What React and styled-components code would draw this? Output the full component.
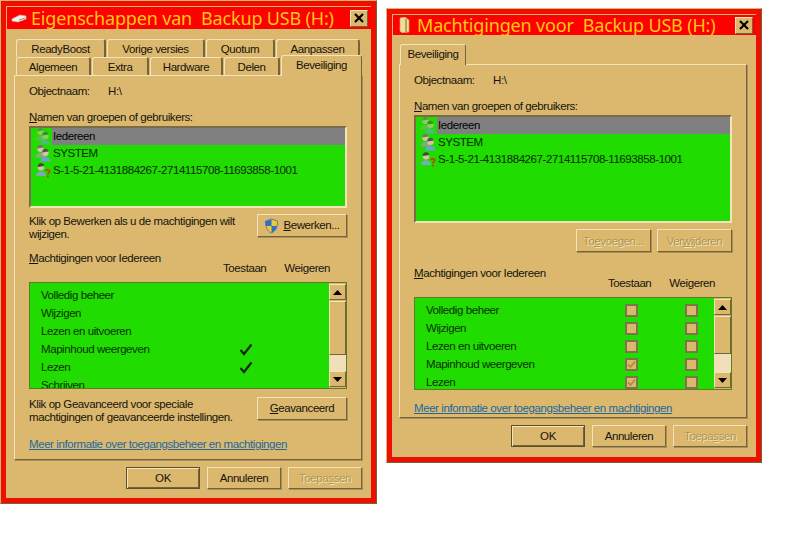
import styled, { createGlobalStyle } from "styled-components";

const tan = "#dcb86f";
const light = "#f3e4bb";
const dark = "#75633a";

const GlobalStyle = createGlobalStyle`
  html, body {
    margin: 0;
    background: #ffffff;
    overflow: hidden;
  }
  * { box-sizing: border-box; }
`;

const Desktop = styled.div`
  display: flex;
  align-items: flex-start;
  gap: 9px;
  width: 800px;
  height: 550px;
  font-family: "Liberation Sans", Arial, sans-serif;
  font-size: 11.5px;
  letter-spacing: -0.42px;
  line-height: 14px;
  color: #14140c;
`;

const Frame = styled.div`
  display: flex;
  flex-direction: column;
  flex: none;
  width: ${({ $w }) => $w}px;
  height: ${({ $h }) => $h}px;
  margin-top: ${({ $top }) => $top}px;
  background: ${tan};
  border: 1px solid;
  border-color: ${tan} ${dark} ${dark} ${tan};
`;

const Inner = styled.div`
  flex: 1;
  background: ${tan};
  border: 5px solid #ee0f00;
  padding-left: ${({ $inset }) => $inset}px;
  display: flex;
  flex-direction: column;
`;

const TitleBar = styled.div`
  display: flex;
  align-items: center;
  height: ${({ $h }) => $h}px;
  margin: 1px 0 0 -${({ $inset }) => $inset - 1}px;
  padding: 0 3px 0 4px;
  background: #ff0000;
`;

const TitleIcon = styled.svg`
  flex: none;
  width: 16px;
  height: 16px;
  margin-right: 4px;
`;

const TitleText = styled.div`
  flex: 1;
  min-width: 0;
  color: #ffc814;
  font-family: "Noto Sans", sans-serif;
  font-size: 18px;
  letter-spacing: -0.17px;
  line-height: 20px;
  white-space: pre;
`;

const CloseButton = styled.div`
  display: flex;
  align-items: center;
  justify-content: center;
  flex: none;
  width: 18px;
  height: 17px;
  background: ${tan};
  border: 1px solid;
  border-color: ${light} ${dark} ${dark} ${light};
`;

const TabRow = styled.div`
  display: flex;
  gap: 1px;
  height: 18px;
  margin-top: ${({ $mt }) => $mt || 0}px;
  margin-left: ${({ $ml }) => $ml}px;
`;

const Tab = styled.div`
  display: flex;
  align-items: center;
  justify-content: center;
  flex: none;
  width: ${({ $w }) => $w}px;
  height: ${({ $active }) => ($active ? 21 : 18)}px;
  margin-top: ${({ $active }) => ($active ? -2 : 0)}px;
  z-index: ${({ $active }) => ($active ? 2 : 1)};
  background: ${tan};
  border: 1px solid;
  border-color: ${light} ${dark} ${tan} ${light};
  border-right-width: ${({ $active }) => ($active ? 1 : 2)}px;
  border-bottom: none;
  border-radius: 3px 3px 0 0;
  padding-bottom: ${({ $active }) => ($active ? 3 : 0)}px;
`;

const Panel = styled.div`
  width: 348px;
  height: ${({ $h }) => $h}px;
  padding: 0 14px;
  border: 1px solid;
  border-color: ${light} ${dark} ${dark} ${light};
  box-shadow: 1px 1px 0 #a8905a;
`;

const NameRow = styled.div`
  display: flex;
  margin-top: 8px;
  span:first-child { width: 79px; }
`;

const Label = styled.div`
  margin-top: ${({ $mt }) => $mt || 0}px;
`;

const UserList = styled.div`
  height: ${({ $h }) => $h}px;
  margin-top: 2px;
  background: #20dc00;
  border: 2px solid;
  border-color: #7a6c45 ${light} ${light} #7a6c45;
  color: #042a00;
`;

const UserRow = styled.div`
  display: flex;
  height: 17px;
`;

const UserIconCell = styled.div`
  flex: none;
  width: 21px;
  padding-left: 4px;
  opacity: ${({ $dim }) => ($dim ? 0.6 : 1)};
`;

const UserName = styled.div`
  flex: 1;
  padding: 1px 0 0 1px;
  background: ${({ $selected }) => ($selected ? "#808080" : "transparent")};
  color: ${({ $selected }) => ($selected ? "#000000" : "#042a00")};
`;

const ActionRow = styled.div`
  display: flex;
  justify-content: space-between;
  height: 27px;
  margin-top: ${({ $mt }) => $mt}px;
  line-height: 13px;
`;

const ActionText = styled.div`
  width: 222px;
  padding-top: 1px;
`;

const ButtonRow = styled.div`
  display: flex;
  justify-content: flex-end;
  gap: ${({ $gap }) => $gap}px;
  margin-top: ${({ $mt }) => $mt}px;
  width: ${({ $w }) => $w || "auto"};
`;

const Button = styled.div`
  display: flex;
  align-items: center;
  justify-content: center;
  gap: 4px;
  flex: none;
  width: ${({ $w }) => $w}px;
  height: ${({ $h }) => $h || 23}px;
  background: ${tan};
  border: 1px solid;
  border-color: ${({ $primary }) =>
    $primary ? "#5f5130" : `${light} ${dark} ${dark} ${light}`};
  box-shadow: ${({ $primary }) =>
    $primary
      ? `inset 1px 1px 0 ${light}, inset -1px -1px 0 ${dark}`
      : "1px 1px 0 #a8905a"};
  color: ${({ $disabled }) => ($disabled ? "#b09552" : "#14140c")};
  text-shadow: ${({ $disabled }) =>
    $disabled ? `1px 1px 0 ${light}` : "none"};
`;

const PermHeader = styled.div`
  display: flex;
  justify-content: space-between;
  height: 24px;
  margin-top: ${({ $mt }) => $mt}px;
`;

const PermColumns = styled.div`
  display: flex;
  align-self: flex-end;
  gap: 18px;
  margin-right: 17px;
`;

const PermList = styled.div`
  display: flex;
  height: ${({ $h }) => $h}px;
  margin-top: 7px;
  background: #20dc00;
  border: 1px solid #5c7a28;
`;

const PermRows = styled.div`
  flex: 1;
  height: 100%;
  padding: 3px 0 0 11px;
  overflow: hidden;
  color: #063000;
`;

const PermRow = styled.div`
  display: grid;
  grid-template-columns: 157px 24px 24px;
  column-gap: 36px;
  align-items: center;
  height: 18px;
`;

const CheckCell = styled.div`
  display: flex;
  justify-content: center;
`;

const CheckBox = styled.div`
  display: flex;
  align-items: center;
  justify-content: center;
  width: 13px;
  height: 13px;
  background: ${tan};
  border: 2px solid #7c7548;
`;

const ScrollBar = styled.div`
  display: flex;
  flex-direction: column;
  flex: none;
  width: 17px;
  padding: 1px 0;
  background: ${tan};
`;

const ScrollButton = styled.div`
  display: flex;
  align-items: center;
  justify-content: center;
  flex: none;
  height: 16px;
  background: ${tan};
  border: 1px solid;
  border-color: ${light} ${dark} ${dark} ${light};
`;

const Thumb = styled.div`
  flex: none;
  height: ${({ $h }) => $h}px;
  margin-top: 1px;
  background: ${tan};
  border: 1px solid;
  border-color: ${light} ${dark} ${dark} ${light};
`;

const Track = styled.div`
  flex: 1;
  background: #f0dfb8;
`;

const HelpLink = styled.div`
  margin-top: ${({ $mt }) => $mt}px;
  color: #20699f;
  text-decoration: underline;
`;

const DriveIcon = () => (
  <TitleIcon viewBox="0 0 16 16">
    <path d="M1 9 L9 5 L15 6 L15 9 L7 12 L1 11 Z" fill="#f4f0ea" stroke="#c8bfb4" strokeWidth="0.6" />
    <path d="M8 10 L14 8" stroke="#9a8f88" strokeWidth="1" />
  </TitleIcon>
);

const FolderIcon = () => (
  <TitleIcon viewBox="0 0 16 16">
    <path d="M3 1 L8 0 L12 3 L12 15 L5 16 L3 14 Z" fill="#f2dc9a" stroke="#c2a45e" strokeWidth="0.7" />
    <path d="M9 2 L9 15" stroke="#a98f52" strokeWidth="1.6" />
  </TitleIcon>
);

const CloseGlyph = () => (
  <svg width="10" height="10" viewBox="0 0 10 10">
    <path d="M1 1 L9 9 M9 1 L1 9" stroke="#000000" strokeWidth="2.2" />
  </svg>
);

const Person = ({ x, y, shirt, hair }) => (
  <g>
    <path
      d={`M${x - 5} ${y + 12} C${x - 5} ${y + 6} ${x + 5} ${y + 6} ${x + 5} ${y + 12} Z`}
      fill={shirt}
    />
    <circle cx={x} cy={y + 3.2} r="3.2" fill="#d8c4a0" />
    <path d={`M${x - 3.2} ${y + 3} A3.2 3.2 0 0 1 ${x + 3.2} ${y + 2} Z`} fill={hair} />
  </g>
);

const GroupIcon = () => (
  <svg width="16" height="17" viewBox="0 0 16 17">
    <Person x={5.5} y={0.5} shirt="#8aa884" hair="#6d7a5c" />
    <Person x={10.5} y={4.5} shirt="#6aa6d2" hair="#4c5a44" />
  </svg>
);

const UnknownIcon = () => (
  <svg width="16" height="17" viewBox="0 0 16 17">
    <Person x={6} y={2} shirt="#7fa8b8" hair="#3c4a3a" />
    <path
      d="M10.5 9 C11 7.3 14.8 7.5 14.6 9.5 C14.5 10.9 12.8 10.9 12.8 12.5 M12.8 13.6 L12.8 15.4"
      fill="none"
      stroke="#c8400c"
      strokeWidth="1.6"
    />
  </svg>
);

const CheckMark = () => (
  <svg width="14" height="13" viewBox="0 0 14 13">
    <path d="M1.5 7 L5 11 L12.5 1.5" fill="none" stroke="#0c2a06" strokeWidth="2.2" />
  </svg>
);

const BoxMark = () => (
  <svg width="9" height="9" viewBox="0 0 9 9">
    <path d="M1 4.5 L3.5 7 L8 1.5" fill="none" stroke="#b08c3c" strokeWidth="1.8" />
  </svg>
);

const ShieldIcon = () => (
  <svg width="15" height="16" viewBox="0 0 15 16">
    <path d="M7.5 1 L13.5 3 C13.5 9 12 13 7.5 15 C3 13 1.5 9 1.5 3 Z" fill="#f0c830" stroke="#5a7fa8" strokeWidth="1" />
    <path d="M7.5 1.5 L7.5 8 L2 8 C1.7 6.5 1.7 4.5 1.8 3.2 Z M7.5 8 L13 8 C12.4 11 10.7 13.5 7.5 14.6 Z" fill="#2f6fc4" />
  </svg>
);

const Arrow = ({ down }) => (
  <svg width="9" height="5" viewBox="0 0 9 5">
    <path d={down ? "M0 0 H9 L4.5 5 Z" : "M0 5 H9 L4.5 0 Z"} fill="#000000" />
  </svg>
);

const users = [
  { name: "Iedereen", icon: GroupIcon, selected: true },
  { name: "SYSTEM", icon: GroupIcon },
  { name: "S-1-5-21-4131884267-2714115708-11693858-1001", icon: UnknownIcon },
];

const perms = [
  { name: "Volledig beheer" },
  { name: "Wijzigen" },
  { name: "Lezen en uitvoeren" },
  { name: "Mapinhoud weergeven", allow: true },
  { name: "Lezen", allow: true },
  { name: "Schrijven" },
];

const Users = ({ height }) => (
  <UserList $h={height}>
    {users.map((user) => (
      <UserRow key={user.name}>
        <UserIconCell $dim={user.selected}>
          <user.icon />
        </UserIconCell>
        <UserName $selected={user.selected}>{user.name}</UserName>
      </UserRow>
    ))}
  </UserList>
);

const PermHead = ({ mt }) => (
  <PermHeader $mt={mt}>
    <div>
      <u>M</u>achtigingen voor Iedereen
    </div>
    <PermColumns>
      <span>Toestaan</span>
      <span>Weigeren</span>
    </PermColumns>
  </PermHeader>
);

const Permissions = ({ height, thumb, boxes, rows }) => (
  <PermList $h={height}>
    <PermRows>
      {perms.slice(0, rows).map((perm) => (
        <PermRow key={perm.name}>
          <span>{perm.name}</span>
          <CheckCell>
            {boxes ? (
              <CheckBox>{perm.allow && <BoxMark />}</CheckBox>
            ) : (
              perm.allow && <CheckMark />
            )}
          </CheckCell>
          <CheckCell>{boxes && <CheckBox />}</CheckCell>
        </PermRow>
      ))}
    </PermRows>
    <ScrollBar>
      <ScrollButton>
        <Arrow />
      </ScrollButton>
      <Thumb $h={thumb} />
      <Track />
      <ScrollButton>
        <Arrow down />
      </ScrollButton>
    </ScrollBar>
  </PermList>
);

const DialogButtons = () => (
  <ButtonRow $mt={7} $w="348px" $gap={7}>
    <Button $w={74} $h={22} $primary>
      OK
    </Button>
    <Button $w={74} $h={22}>
      Annuleren
    </Button>
    <Button $w={74} $h={22} $disabled>
      <span>
        Toepa<u>s</u>sen
      </span>
    </Button>
  </ButtonRow>
);

const Name = () => (
  <>
    <NameRow>
      <span>Objectnaam:</span>
      <span>H:\</span>
    </NameRow>
    <Label $mt={12}>
      <u>N</u>amen van groepen of gebruikers:
    </Label>
  </>
);

const link = "Meer informatie over toegangsbeheer en machtigingen";

export default function App() {
  return (
    <Desktop>
      <GlobalStyle />

      <Frame $w={377} $h={504} $top={0}>
        <Inner $inset={8}>
          <TitleBar $h={22} $inset={8}>
            <DriveIcon />
            <TitleText>{"Eigenschappen van  Backup USB (H:)"}</TitleText>
            <CloseButton>
              <CloseGlyph />
            </CloseButton>
          </TitleBar>

          <TabRow $mt={10} $ml={2}>
            <Tab $w={90}>ReadyBoost</Tab>
            <Tab $w={98}>Vorige versies</Tab>
            <Tab $w={69}>Quotum</Tab>
            <Tab $w={84}>Aanpassen</Tab>
          </TabRow>
          <TabRow $ml={2}>
            <Tab $w={75}>Algemeen</Tab>
            <Tab $w={57}>Extra</Tab>
            <Tab $w={73}>Hardware</Tab>
            <Tab $w={56}>Delen</Tab>
            <Tab $w={81} $active>
              Beveiliging
            </Tab>
          </TabRow>

          <Panel $h={385}>
            <Name />
            <Users height={82} />
            <ActionRow $mt={6}>
              <ActionText>
                Klik op Bewerken als u de machtigingen wilt wijzigen.
              </ActionText>
              <Button $w={90}>
                <ShieldIcon />
                <span>
                  <u>B</u>ewerken...
                </span>
              </Button>
            </ActionRow>
            <PermHead mt={10} />
            <Permissions height={107} thumb={54} rows={6} />
            <ActionRow $mt={8}>
              <ActionText>
                Klik op Geavanceerd voor speciale machtigingen of geavanceerde
                instellingen.
              </ActionText>
              <Button $w={90}>
                <span>
                  <u>G</u>eavanceerd
                </span>
              </Button>
            </ActionRow>
            <HelpLink $mt={13}>{link}</HelpLink>
          </Panel>

          <DialogButtons />
        </Inner>
      </Frame>

      <Frame $w={376} $h={455} $top={8}>
        <Inner $inset={7}>
          <TitleBar $h={20} $inset={7}>
            <FolderIcon />
            <TitleText>{"Machtigingen voor  Backup USB (H:)"}</TitleText>
            <CloseButton>
              <CloseGlyph />
            </CloseButton>
          </TitleBar>

          <TabRow $mt={11} $ml={1}>
            <Tab $w={66} $active>
              Beveiliging
            </Tab>
          </TabRow>

          <Panel $h={354}>
            <Name />
            <Users height={108} />
            <ButtonRow $mt={6} $gap={6}>
              <Button $w={75} $disabled>
                <span>
                  To<u>e</u>voegen...
                </span>
              </Button>
              <Button $w={75} $disabled>
                <span>
                  Ver<u>w</u>ijderen
                </span>
              </Button>
            </ButtonRow>
            <PermHead mt={14} />
            <Permissions height={93} thumb={38} boxes rows={5} />
            <HelpLink $mt={11}>{link}</HelpLink>
          </Panel>

          <DialogButtons />
        </Inner>
      </Frame>
    </Desktop>
  );
}
